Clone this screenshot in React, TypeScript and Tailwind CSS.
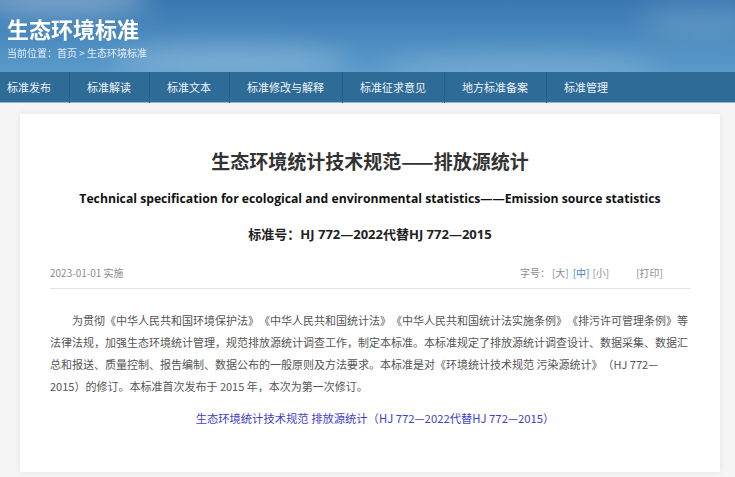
import React from 'react';

const navItems = ['标准发布', '标准解读', '标准文本', '标准修改与解释', '标准征求意见', '地方标准备案', '标准管理'];

const cjk = { fontFamily: '"Noto Sans CJK SC", "Noto Sans", sans-serif' };
const latin = { fontFamily: '"Open Sans", "Noto Sans CJK SC", sans-serif' };

const Banner: React.FC = () => (
  <header className="relative h-[72px] overflow-hidden bg-gradient-to-b from-[#3a78b0] via-[#4989be] to-[#5b9bcb]">
    {/* soft cloud shapes over the sky */}
    <svg className="absolute inset-0 h-full w-full" viewBox="0 0 735 72" preserveAspectRatio="none">
      <defs>
        <filter id="cloudBlur">
          <feGaussianBlur stdDeviation="12" />
        </filter>
      </defs>
      <g filter="url(#cloudBlur)" fill="#ffffff">
        <ellipse cx="60" cy="0" rx="90" ry="14" opacity="0.35" />
        <ellipse cx="230" cy="60" rx="120" ry="16" opacity="0.22" />
        <ellipse cx="520" cy="66" rx="140" ry="12" opacity="0.18" />
        <ellipse cx="700" cy="20" rx="60" ry="18" opacity="0.12" />
      </g>
    </svg>
    <div className="relative px-[7px] pt-[14px]" style={cjk}>
      <h1 className="text-[22px] font-bold leading-[28px] text-white">生态环境标准</h1>
      <p className="mt-[4px] text-[10px] leading-[14px] text-[#e3eef8]">当前位置：首页 &gt; 生态环境标准</p>
    </div>
  </header>
);

const NavBar: React.FC = () => (
  <nav className="flex h-[31px] items-center border-b border-[#8db7d8] bg-[#2f6b97] pl-[7px]" style={cjk}>
    {navItems.map((item, i) => (
      <span
        key={item}
        className={`text-[11px] leading-[31px] text-[#eef4fa] ${
          i === 0 ? 'pr-[18px]' : 'border-l border-[#285e86] pl-[17px] pr-[18px]'
        }`}
      >
        {item}
      </span>
    ))}
  </nav>
);

export default function App() {
  return (
    <div className="min-h-[477px] w-[735px] bg-[#f5f5f5] [text-spacing-trim:space-all]">
      <Banner />
      <NavBar />

      <main className="pl-[20px] pr-[15px] pt-[11px] pb-[7px]">
        <article className="bg-white px-[30px] pt-[35px] pb-[44px] shadow-[0_0_6px_rgba(0,0,0,0.08)]">
          <h2 className="text-center text-[19px] font-bold leading-[24px] text-[#333]" style={cjk}>
            生态环境统计技术规范——排放源统计
          </h2>
          <p className="mt-[16px] text-center text-[12.2px] font-bold leading-[20px] text-[#111]" style={latin}>
            Technical specification for ecological and environmental statistics——Emission source statistics
          </p>
          <p className="mt-[15px] text-center text-[13px] font-bold leading-[20px] text-[#222]" style={latin}>
            标准号：HJ 772—2022代替HJ 772—2015
          </p>

          <div className="mt-[21px] flex items-center justify-between border-b border-[#dfe3e6] pb-[7px] text-[10px] leading-[16px] text-[#8c8c8c]" style={cjk}>
            <span>2023-01-01 实施</span>
            <span className="flex items-center pr-[27px]">
              <span>字号：</span>
              <span className="ml-[2px]">[大]</span>
              <span className="ml-[4px] text-[#3a86c8]">[中]</span>
              <span className="ml-[3px]">[小]</span>
              <span className="ml-[27px]">[打印]</span>
            </span>
          </div>

          <p className="mt-[20px] indent-[22px] text-[11px] leading-[22px] text-[#555]" style={cjk}>
            为贯彻《中华人民共和国环境保护法》《中华人民共和国统计法》《中华人民共和国统计法实施条例》《排污许可管理条例》等法律法规，加强生态环境统计管理，规范排放源统计调查工作，制定本标准。本标准规定了排放源统计调查设计、数据采集、数据汇总和报送、质量控制、报告编制、数据公布的一般原则及方法要求。本标准是对《环境统计技术规范 污染源统计》（HJ 772—2015）的修订。本标准首次发布于 2015 年，本次为第一次修订。
          </p>

          <p className="mt-[11px] pl-[10px] text-center text-[11.3px] leading-[20px] text-[#4040cc]" style={cjk}>
            生态环境统计技术规范 排放源统计（HJ 772—2022代替HJ 772—2015）
          </p>
        </article>
      </main>
    </div>
  );
}
